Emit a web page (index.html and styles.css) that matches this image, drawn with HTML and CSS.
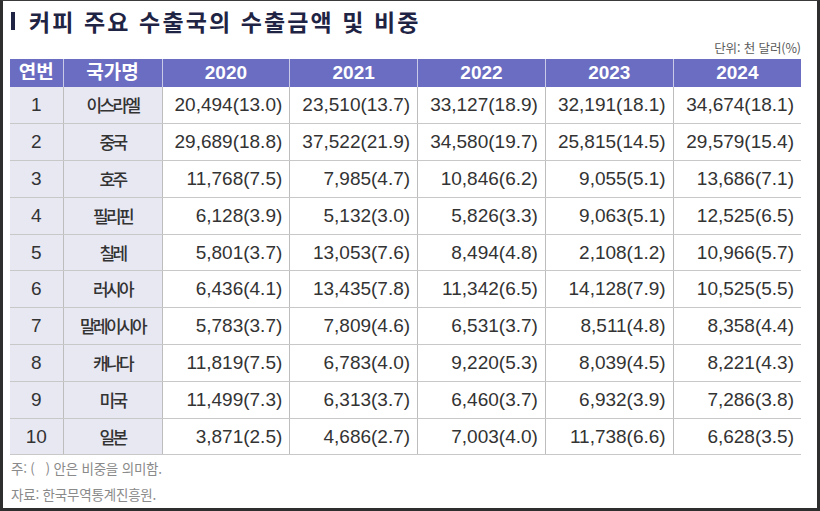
FILE: index.html
```html
<!DOCTYPE html>
<html lang="ko">
<head>
<meta charset="utf-8">
<title>커피 주요 수출국의 수출금액 및 비중</title>
<link rel="stylesheet" href="styles.css">
</head>
<body>
<div class="frame">
  <h1 class="title"><span class="bar"></span>커피 주요 수출국의 수출금액 및 비중</h1>
  <div class="unit">단위: 천 달러(%)</div>
  <table class="data">
    <colgroup>
      <col class="c-no"><col class="c-name"><col class="c-y"><col class="c-y"><col class="c-y"><col class="c-y"><col class="c-y">
    </colgroup>
    <thead>
      <tr><th>연번</th><th>국가명</th><th>2020</th><th>2021</th><th>2022</th><th>2023</th><th>2024</th></tr>
    </thead>
    <tbody>
      <tr><td class="k">1</td><td class="k n">이스라엘</td><td>20,494(13.0)</td><td>23,510(13.7)</td><td>33,127(18.9)</td><td>32,191(18.1)</td><td>34,674(18.1)</td></tr>
      <tr><td class="k">2</td><td class="k n">중국</td><td>29,689(18.8)</td><td>37,522(21.9)</td><td>34,580(19.7)</td><td>25,815(14.5)</td><td>29,579(15.4)</td></tr>
      <tr><td class="k">3</td><td class="k n">호주</td><td>11,768(7.5)</td><td>7,985(4.7)</td><td>10,846(6.2)</td><td>9,055(5.1)</td><td>13,686(7.1)</td></tr>
      <tr><td class="k">4</td><td class="k n">필리핀</td><td>6,128(3.9)</td><td>5,132(3.0)</td><td>5,826(3.3)</td><td>9,063(5.1)</td><td>12,525(6.5)</td></tr>
      <tr><td class="k">5</td><td class="k n">칠레</td><td>5,801(3.7)</td><td>13,053(7.6)</td><td>8,494(4.8)</td><td>2,108(1.2)</td><td>10,966(5.7)</td></tr>
      <tr><td class="k">6</td><td class="k n">러시아</td><td>6,436(4.1)</td><td>13,435(7.8)</td><td>11,342(6.5)</td><td>14,128(7.9)</td><td>10,525(5.5)</td></tr>
      <tr><td class="k">7</td><td class="k n">말레이시아</td><td>5,783(3.7)</td><td>7,809(4.6)</td><td>6,531(3.7)</td><td>8,511(4.8)</td><td>8,358(4.4)</td></tr>
      <tr><td class="k">8</td><td class="k n">캐나다</td><td>11,819(7.5)</td><td>6,783(4.0)</td><td>9,220(5.3)</td><td>8,039(4.5)</td><td>8,221(4.3)</td></tr>
      <tr><td class="k">9</td><td class="k n">미국</td><td>11,499(7.3)</td><td>6,313(3.7)</td><td>6,460(3.7)</td><td>6,932(3.9)</td><td>7,286(3.8)</td></tr>
      <tr><td class="k">10</td><td class="k n">일본</td><td>3,871(2.5)</td><td>4,686(2.7)</td><td>7,003(4.0)</td><td>11,738(6.6)</td><td>6,628(3.5)</td></tr>
    </tbody>
  </table>
  <p class="note">주: (&nbsp;&nbsp;&nbsp;) 안은 비중을 의미함.</p>
  <p class="note src">자료: 한국무역통계진흥원.</p>
</div>
</body>
</html>
```

FILE: styles.css
```css
* { box-sizing: border-box; }
html, body { margin: 0; padding: 0; background: #ffffff; }
body {
  font-family: "Liberation Sans", "Noto Sans CJK KR", sans-serif;
  color: #333333;
}
.frame {
  width: 820px;
  height: 511px;
  border-top: 1px solid #3a3a3a;
  border-left: 3px solid #2e2e2e;
  border-right: 3px solid #2e2e2e;
  border-bottom: 3px solid #2e2e2e;
  padding: 9px 16px 0 7px;
  overflow: hidden;
}
.title {
  margin: 0;
  display: flex;
  align-items: center;
  height: 22px;
  font-family: "Noto Sans CJK KR", sans-serif;
  font-weight: 700;
  font-size: 23px;
  letter-spacing: 2.1px;
  color: #1f2444;
  line-height: 22px;
}
.bar {
  display: inline-block;
  width: 4px;
  height: 18px;
  background: #1f2444;
  margin: 0 14px 0 1px;
}
.unit {
  margin-top: 9px;
  height: 18px;
  text-align: right;
  font-family: "Noto Sans CJK KR", sans-serif;
  font-size: 12.5px;
  color: #5a5a5a;
  line-height: 14px;
  letter-spacing: -0.1px;
}
.data {
  border-collapse: collapse;
  table-layout: fixed;
  width: 791px;
}
.c-no { width: 53px; }
.c-name { width: 99px; }
.c-y { width: 127.8px; }
.data th {
  height: 28px;
  background: #6a6dc2;
  color: #ffffff;
  font-family: "Liberation Sans", "Noto Sans CJK KR", sans-serif;
  font-weight: 700;
  font-size: 19px;
  padding: 0;
  text-align: center;
  border-left: 1px solid #c9cae8;
  line-height: 28px;
}
.data th:first-child { border-left: none; }
.data td {
  height: 36.8px;
  padding: 0 7px 0 0;
  text-align: right;
  font-size: 19px;
  color: #333333;
  border-bottom: 1px solid #c8c8c8;
  border-left: 1px solid #bdbdbd;
  line-height: 20px;
  white-space: nowrap;
}
.data td:first-child { border-left: none; }
.data td.k {
  background: #e8e8f3;
  text-align: center;
  padding: 0;
}
.data td.n {
  font-family: "Noto Sans CJK KR", sans-serif;
  font-size: 17px;
  font-weight: 500;
  letter-spacing: -2.6px;
}
.note {
  margin: 5px 0 0 1px;
  font-family: "Noto Sans CJK KR", sans-serif;
  font-size: 13.5px;
  letter-spacing: -0.2px;
  color: #8a8a8a;
  line-height: 16px;
}
.note.src { margin-top: 10px; }
```
